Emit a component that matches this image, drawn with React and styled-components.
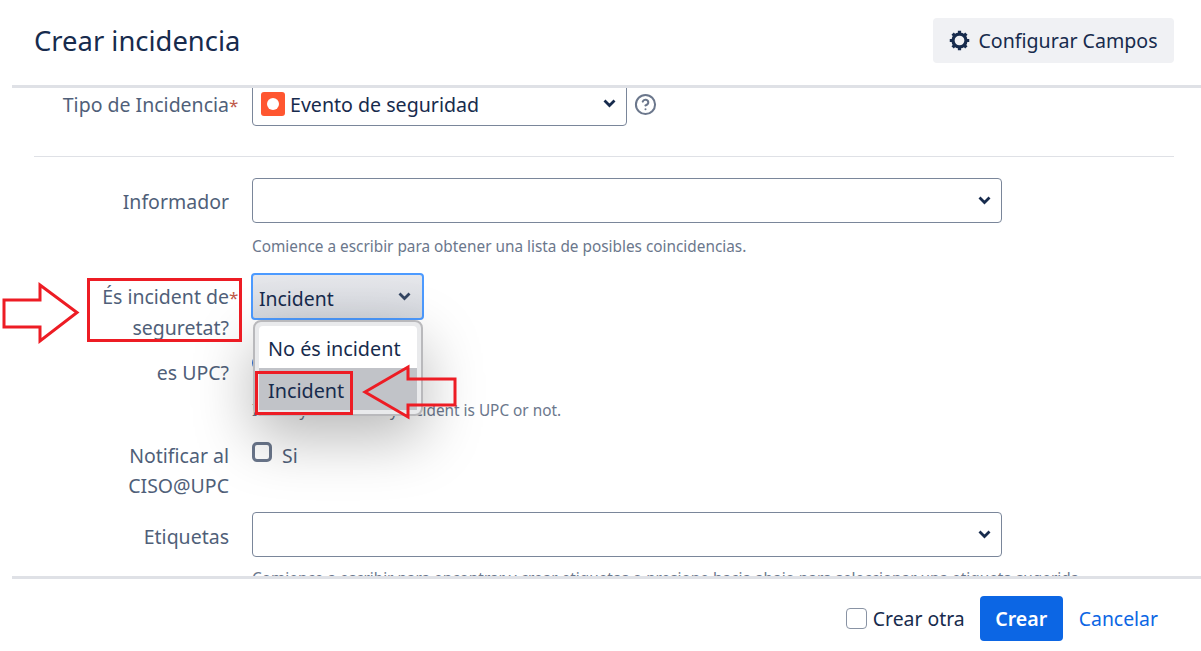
import React from "react";
import styled, { createGlobalStyle } from "styled-components";
import { CircleHelp } from "lucide-react";

const GlobalStyle = createGlobalStyle`
  html, body {
    margin: 0;
    padding: 0;
    background: #fff;
  }
  body {
    font-family: "Noto Sans", "Open Sans", sans-serif;
    color: #172b4d;
  }
`;

const Chevron = ({ color = "#172b4d" }) => (
  <svg width="13" height="9" viewBox="0 0 13 9">
    <path d="M1.500 1.500 L6.500 6.500 L11.500 1.500" fill="none" stroke={color} strokeWidth="2.8" />
  </svg>
);

const Gear = () => (
  <svg width="21" height="21" viewBox="0 0 22 22">
    <circle cx="11" cy="11" r="6.8" fill="none" stroke="#172b4d" strokeWidth="3.4" />
    <path
      d="M11 .8v3M11 18.2v3M.8 11h3M18.2 11h3M3.8 3.8l2.1 2.1M16.1 16.1l2.1 2.1M18.2 3.8l-2.1 2.1M5.9 16.1l-2.1 2.1"
      stroke="#172b4d"
      strokeWidth="3.4"
    />
  </svg>
);

const App = () => {
  return (
    <Page>
      <GlobalStyle />
      <Header>
        <Title>Crear incidencia</Title>
        <ConfigButton>
          <Gear />
          Configurar Campos
        </ConfigButton>
      </Header>

      <Body>
        <Row $height={75} $top={-7}>
          <Label>Tipo de Incidencia<Required>*</Required></Label>
          <SelectWithHelp>
            <Select $width={375}>
              <IssueIcon />
              <SelectText>Evento de seguridad</SelectText>
              <Chevron />
            </Select>
            <HelpIcon size={23} strokeWidth={2.1} />
          </SelectWithHelp>
        </Row>
        <Divider />
        <Row $height={64}>
          <Label>Informador</Label>
          <Field>
            <Select $width={750}>
              <SelectText />
              <Chevron />
            </Select>
            <Hint>Comience a escribir para obtener una lista de posibles coincidencias.</Hint>
          </Field>
        </Row>
        <Row $height={70} $top={31}>
          <Label>És incident de<Required>*</Required><br />seguretat?</Label>
          <Field>
            <OpenSelect>
              <SelectText>Incident</SelectText>
              <Chevron color="#344563" />
            </OpenSelect>
            <Popup>
              <Option>No és incident</Option>
              <Option $selected>Incident</Option>
            </Popup>
          </Field>
        </Row>
        <Row $height={80} $top={6}>
          <Label>es UPC?</Label>
          <Field>
            <Toggle />
            <Hint $top={28}>Identify whether my incident is UPC or not.</Hint>
          </Field>
        </Row>
        <Row $height={70} $top={3}>
          <Label>Notificar al<br />CISO@UPC</Label>
          <CheckRow>
            <Checkbox />
            Si
          </CheckRow>
        </Row>
        <Row $top={10}>
          <Label $top={10}>Etiquetas</Label>
          <Field>
            <Select $width={750}>
              <SelectText />
              <Chevron />
            </Select>
            <Hint $top={10}>Comience a escribir para encontrar y crear etiquetas o presione hacia abajo para seleccionar una etiqueta sugerida.</Hint>
          </Field>
        </Row>
      </Body>

      <Footer>
        <CheckRow $plain>
          <FooterCheckbox />
          Crear otra
        </CheckRow>
        <SubmitButton>Crear</SubmitButton>
        <CancelLink>Cancelar</CancelLink>
      </Footer>

      <Annotations width="1201" height="651" viewBox="0 0 1201 651">
        <rect x="88.5" y="279.5" width="152" height="61" />
        <rect x="256.5" y="372.5" width="95" height="41" />
        <path d="M4 300H40V285L77 312.500L40 341V327H4Z" />
        <path d="M365 392L408 367V379H455V405H408V417Z" />
      </Annotations>
    </Page>
  );
};

const Page = styled.div`
  position: relative;
  width: 1201px;
  height: 651px;
  overflow: hidden;
  display: flex;
  flex-direction: column;
`;

const Header = styled.header`
  height: 85px;
  flex: none;
  box-sizing: border-box;
  padding: 18px 27px 0 34px;
  display: flex;
  justify-content: space-between;
  align-items: flex-start;
`;

const Title = styled.h1`
  margin: 3px 0 0;
  font-size: 27.4px;
  line-height: 40px;
  font-weight: 400;
  color: #172b4d;
`;

const ConfigButton = styled.button`
  width: 241px;
  height: 45px;
  display: flex;
  align-items: center;
  justify-content: center;
  gap: 8px;
  border: none;
  border-radius: 4px;
  background: #f0f1f4;
  color: #172b4d;
  font: inherit;
  font-size: 19.6px;
  padding: 0;
`;

const Body = styled.main`
  flex: 1;
  min-height: 0;
  margin-left: 12px;
  padding: 0 27px 0 22px;
  border-top: 3px solid #dfe1e6;
  border-bottom: 3px solid #dfe1e6;
  overflow: hidden;
`;

const Row = styled.div`
  display: grid;
  grid-template-columns: 195px auto;
  justify-content: start;
  column-gap: 23px;
  align-items: start;
  height: ${(p) => (p.$height ? `${p.$height}px` : "auto")};
  margin-top: ${(p) => p.$top || 0}px;
`;

const Label = styled.label`
  text-align: right;
  font-size: 19.5px;
  line-height: 30px;
  padding-top: ${(p) => p.$top || 9}px;
  color: #505f79;
  white-space: nowrap;
`;

const Required = styled.span`
  color: #bf5a4a;
  display: inline-block;
  width: 0;
  font-size: 17px;
`;

const Field = styled.div`
  position: relative;
  display: flex;
  flex-direction: column;
  align-items: flex-start;
`;

const SelectWithHelp = styled.div`
  display: flex;
  align-items: center;
  gap: 7px;
`;

const Select = styled.div`
  box-sizing: border-box;
  width: ${(p) => p.$width}px;
  height: 45px;
  display: flex;
  align-items: center;
  gap: 5px;
  padding: 0 10px 0 8px;
  border: 1px solid #7a869a;
  border-radius: 4px;
  background: #fff;
  font-size: 19.6px;
`;

const SelectText = styled.span`
  flex: 1;
  padding-top: 1px;
  color: #172b4d;
  white-space: nowrap;
`;

const IssueIcon = styled.span`
  position: relative;
  width: 24px;
  height: 24px;
  flex: none;
  border-radius: 3px;
  background: #ff5630;
  &::after {
    content: "";
    position: absolute;
    left: 6px;
    top: 6px;
    width: 12px;
    height: 12px;
    border-radius: 50%;
    background: #fff;
  }
`;

const HelpIcon = styled(CircleHelp)`
  color: #6b778c;
  margin-top: 2px;
`;

const Divider = styled.hr`
  margin: 0 0 21px;
  border: none;
  border-top: 1px solid #dfe1e6;
`;

const Hint = styled.div`
  margin-top: ${(p) => p.$top || 12}px;
  font-size: 15.35px;
  line-height: 22px;
  color: #6b778c;
  white-space: nowrap;
`;

const OpenSelect = styled.div`
  box-sizing: border-box;
  width: 173px;
  height: 47px;
  margin-left: -1px;
  display: flex;
  align-items: center;
  padding: 0 11px 0 6px;
  border: 2px solid #4c9aff;
  border-radius: 4px;
  background: linear-gradient(#e6e7eb, #d5d8de);
  font-size: 19.4px;

  ${SelectText} {
    padding-top: 4px;
  }
`;

const Popup = styled.div`
  position: absolute;
  z-index: 2;
  left: 1px;
  top: 47px;
  box-sizing: border-box;
  width: 170px;
  height: 96px;
  padding: 4px;
  border: 2px solid #b9b9bc;
  border-radius: 8px;
  background: #e9eaec;
  box-shadow: 0 22px 60px rgba(0, 0, 0, 0.28);
`;

const Option = styled.div`
  height: 42px;
  box-sizing: border-box;
  padding: 3px 0 0 9px;
  display: flex;
  align-items: center;
  font-size: 19.8px;
  color: #172b4d;
  border-radius: ${(p) => (p.$selected ? "0" : "4px 4px 0 0")};
  background: ${(p) => (p.$selected ? "#c1c3c8" : "#fff")};
`;

const Toggle = styled.span`
  width: 40px;
  height: 16px;
  margin-top: 6px;
  border-radius: 8px;
  background: #2f6fd6;
`;

const CheckRow = styled.div`
  display: flex;
  align-items: center;
  gap: ${(p) => (p.$plain ? "6px" : "10px")};
  font-size: 19.4px;
  line-height: 31px;
  padding-top: ${(p) => (p.$plain ? "0" : "8px")};
  color: ${(p) => (p.$plain ? "#172b4d" : "#505f79")};
`;

const Checkbox = styled.span`
  box-sizing: border-box;
  width: 20px;
  height: 20px;
  margin-top: -7px;
  border: 3px solid #6b778c;
  border-radius: 5px;
  background: #fff;
`;

const FooterCheckbox = styled.span`
  box-sizing: border-box;
  width: 21px;
  height: 21px;
  border: 1px solid #8993a4;
  border-radius: 4px;
  background: #fff;
`;

const Footer = styled.footer`
  height: 72px;
  flex: none;
  box-sizing: border-box;
  display: flex;
  align-items: center;
  justify-content: flex-end;
  padding: 7px 43px 0 0;
`;

const SubmitButton = styled.button`
  width: 83px;
  height: 45px;
  margin: 0 16px 0 15px;
  border: none;
  border-radius: 4px;
  background: #0c66e4;
  color: #fff;
  font: inherit;
  font-size: 19.6px;
  font-weight: 600;
  padding: 0;
`;

const CancelLink = styled.a`
  font-size: 19.4px;
  color: #0c66e4;
`;

const Annotations = styled.svg`
  position: absolute;
  z-index: 3;
  left: 0;
  top: 0;
  pointer-events: none;
  rect, path {
    fill: none;
    stroke: #ed1c24;
    stroke-width: 3;
  }
`;

export default App;
